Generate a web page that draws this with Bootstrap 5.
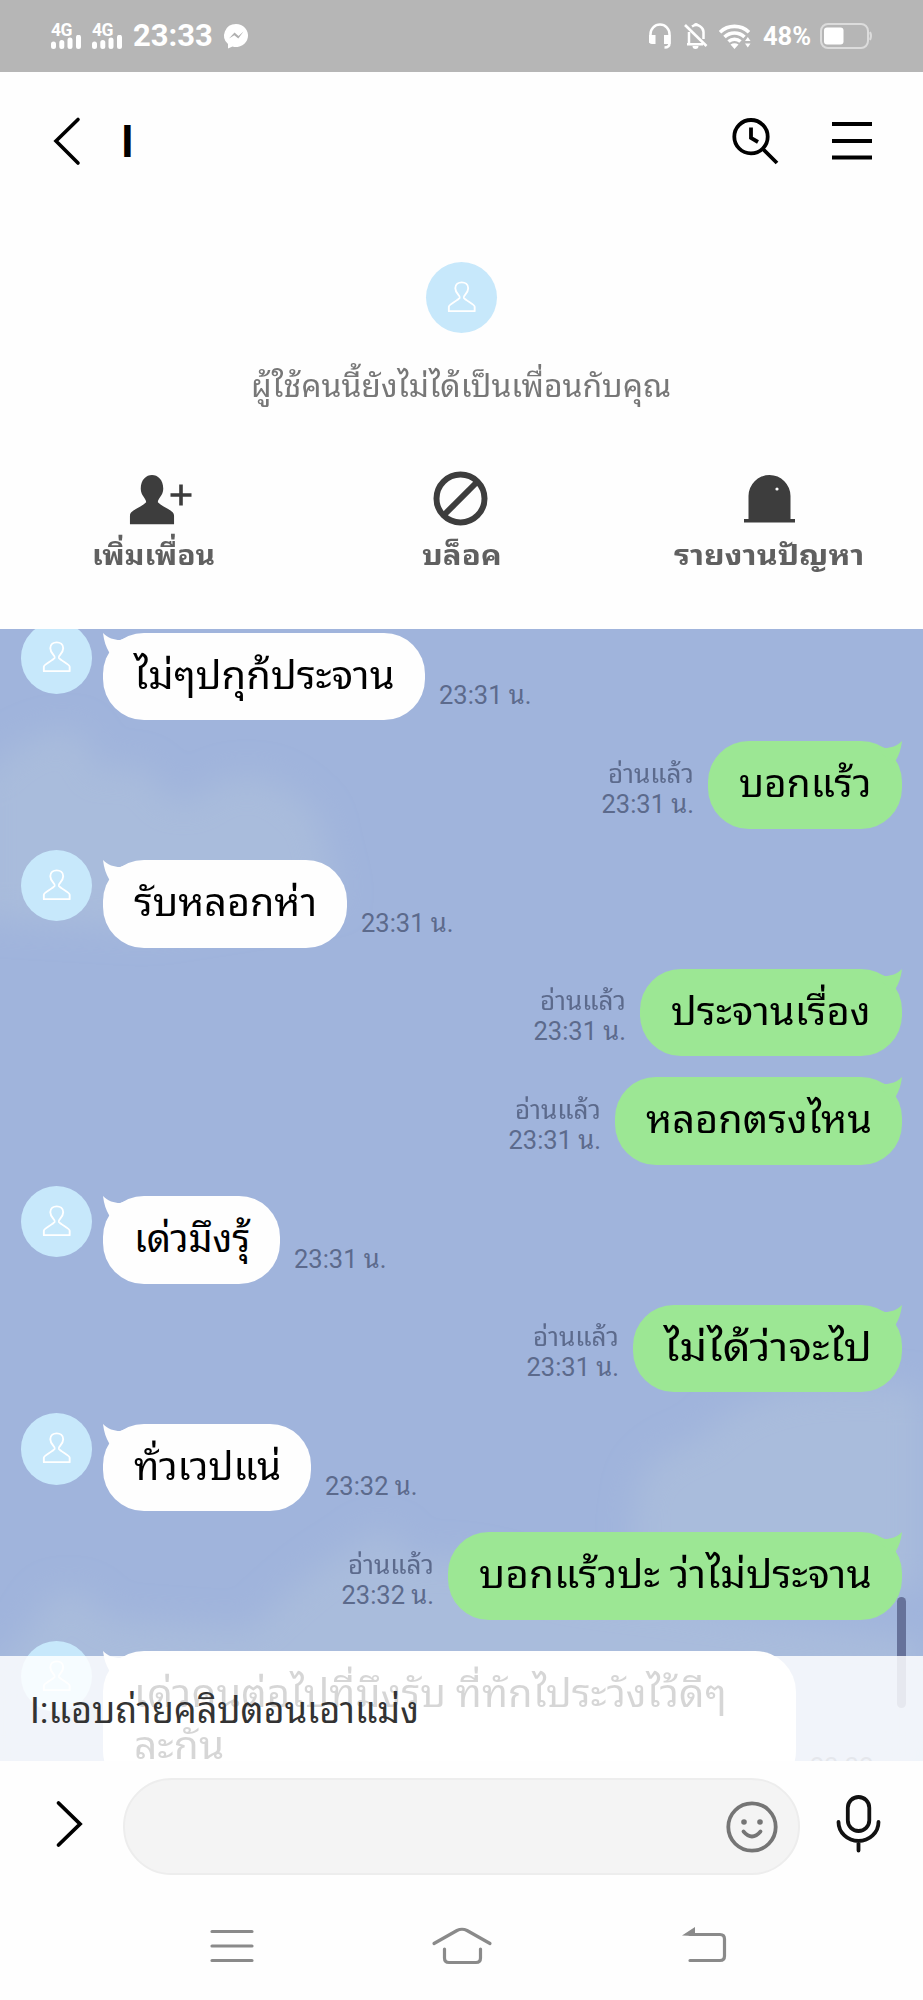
<!DOCTYPE html>
<html lang="th">
<head>
<meta charset="utf-8">
<meta name="viewport" content="width=device-width, initial-scale=1">
<title>Chat</title>
<link href="https://cdn.jsdelivr.net/npm/bootstrap@5.3.0/dist/css/bootstrap.min.css" rel="stylesheet">
<style>
body{width:923px;height:2000px;overflow:hidden;background:#fefefe;color:#000;font-family:Roboto,"Noto Sans Thai Looped","Noto Looped Thai","Droid Sans Thai","Waree","Loma","Noto Sans Thai","Noto Sans",sans-serif}
svg{display:block;flex:none;overflow:visible}
.status{height:72px;background:#b6b6b6;color:#fff;padding-left:51px;padding-right:51px}
.sig{width:30px;margin-right:11px}
.sig b{font-size:17.5px;line-height:14px;height:12px;letter-spacing:-.6px}
.clock{font-size:31px;line-height:36px;width:91px;font-weight:700}
.pct{font-size:25.5px;line-height:36px;font-weight:700}
.topbar{height:138px;padding:0 51px 0 54px}
.peer{font-size:43.5px;line-height:50px;font-weight:700;margin-left:39px;padding-top:4px}
.notice{height:419px}
.ava{width:71.5px;height:71.5px;background:#c7e8fb;flex:none}
.hint{font-size:31px;line-height:44px;color:#777}
.act{font-size:28px;line-height:40px;font-weight:700;color:#606060}
.act svg{margin-bottom:11px}
.fit{display:inline-block;white-space:nowrap}
.chat{height:1132px;background:#a0b4dc}
.msg{height:87.5px;margin-bottom:21px}
.gap-big{margin-bottom:31.5px}
.in{padding-left:20.5px}
.in .ava{margin-top:-10.5px;margin-right:11px}
.out{padding-right:21px;justify-content:flex-end}
.bub{height:87.5px;border-radius:41px;padding:17px 31px 0;font-size:38px;line-height:52px;position:relative;flex:none;white-space:nowrap}
.bub .fit,.toast-line .fit{transform-origin:left}
.in .bub{background:#fefefe}
.out .bub{background:#9ce794}
.tail{position:absolute;top:0;left:0}
.out .tail{left:auto;right:0;transform:scaleX(-1)}
.when{font-size:25.5px;line-height:30px;color:#5c6a8c;margin-left:14px;padding-bottom:10px;white-space:nowrap}
.when .fit{transform-origin:right}
.out .when{margin:0 14px 0 0;text-align:right}
.toast-line{position:absolute;left:0;right:0;top:1027px;height:105px;background:rgba(255,255,255,.84);color:#333;font-size:36px;line-height:52px;padding:29px 0 0 30px;white-space:nowrap}
.thumb{position:absolute;right:17.5px;top:968px;width:8.5px;height:111px;border-radius:5px;background:#66729a}
.compose{height:129px;padding-left:57px}
.pill{width:677px;height:97px;margin-left:42px;margin-top:2px;background:#f4f4f4;border:2px solid #ededed;padding-right:20px}
.sys{height:110px}
</style>
</head>
<body>
<svg width="0" height="0" class="position-absolute">
  <defs>
    <symbol id="user" viewBox="0 0 72 72"><path d="M23 49.500v-4.500c0-2.500 9-6 11-9 1-2-4.500-4-4.500-9.500 0-8 13-8 13 0 0 5.500-5.500 7.500-4.500 9.500 2 3 11 6.500 11 9v4.500z" fill="none" stroke="#fff" stroke-width="1.900" stroke-linejoin="round"/></symbol>
    <symbol id="horn" viewBox="0 0 40 40"><path d="M0 0C5 5 11 7 17 7L26 4 10 25 6 19C3 14 1 8 0 0z"/></symbol>
    <symbol id="bars" viewBox="0 0 30 14"><path d="M2.500 9v2.500M10.800 7.500v4M19 5v6.500M27.500 2.300v9.200" stroke="#fff" stroke-width="5" stroke-linecap="round"/></symbol>
  </defs>
</svg>

<header class="status d-flex align-items-center">
  <div class="sig d-flex flex-column"><b>4G</b><svg width="30" height="14"><use href="#bars"/></svg></div>
  <div class="sig d-flex flex-column"><b>4G</b><svg width="30" height="14"><use href="#bars"/></svg></div>
  <div class="clock">23:33</div>
  <svg width="24" height="25" viewBox="0 0 24 25"><path d="M12 0a12 11.500 0 1 1-3.500 22.500L4 24.500V20A12 11.500 0 0 1 12 0z" fill="#fff"/><path d="M5 14.500l5.500-6 4 3.500 5-4.500-5.200 7-4-3.300z" fill="#b0b0b0"/></svg>
  <div class="d-flex align-items-center ms-auto">
    <svg width="22" height="26" viewBox="0 0 22 26" style="margin-right:14px"><path d="M1.500 20V11a9.500 9.500 0 0 1 19 0v9c0 3-2 4.500-5 4.500" fill="none" stroke="#fff" stroke-width="2.500"/><path d="M0 12h6.500v9H3a3 3 0 0 1-3-3zM15 12h6.500v9H15z" fill="#fff"/></svg>
    <svg width="22" height="26" viewBox="0 0 22 26" class="me-2"><path d="M4 9v12M2 21.200h16M7 3.500C13-.5 18.500 5 18.500 9v7" fill="none" stroke="#fff" stroke-width="2.500"/><path d="M0 2l21.500 21" stroke="#fff" stroke-width="2.600"/><path d="M7.500 23h6a3 3 0 0 1-6 0zM8.500 2.500a2.500 2.500 0 0 1 5 0z" fill="#fff"/></svg>
    <svg width="32" height="25" viewBox="0 0 32 25" class="ms-1" style="margin-right:12px"><g fill="none" stroke="#fff" stroke-width="3.600"><path d="M1 8.200a21 21 0 0 1 29 0"/><path d="M5.500 13a14.500 14.500 0 0 1 20 0"/><path d="M9.500 17.500a9 9 0 0 1 12 0"/></g><path d="M11.500 20.500q4-2.500 8 0l-4 4.500zM26 17l2.800-4 2.700 4zM26 19.500h5.500l-2.700 4z" fill="#fff"/></svg>
    <div class="pct">48%</div>
    <svg width="52" height="26" viewBox="0 0 52 26" style="margin-left:9px"><rect x="1" y="1" width="47" height="24" rx="7" fill="none" stroke="#dcdcdc" stroke-width="2"/><rect x="4" y="4.500" width="19.500" height="17" rx="3" fill="#fff"/><path d="M50 9q2 4 0 8" stroke="#dcdcdc" stroke-width="2" fill="none"/></svg>
  </div>
</header>

<nav class="topbar d-flex align-items-center">
  <svg width="28" height="46" viewBox="0 0 28 46"><path d="M24 1.500L2 23l22 22" fill="none" stroke="#000" stroke-width="3.600" stroke-linecap="round"/></svg>
  <div class="peer">I</div>
  <svg width="46" height="46" viewBox="0 0 46 46" class="ms-auto"><g fill="none" stroke="#000" stroke-width="3.800"><circle cx="19" cy="18.700" r="16.700"/><path d="M19 9.500V20l7 4M31 31l14 14"/></g></svg>
  <svg width="40" height="38" viewBox="0 0 40 38" style="margin-left:54px"><path d="M0 2h40M0 19h40M0 35.500h40" stroke="#000" stroke-width="4"/></svg>
</nav>

<section class="notice">
  <div class="d-flex flex-column align-items-center" style="padding-top:51.5px">
    <div class="ava rounded-circle"><svg width="71.500" height="71.500"><use href="#user"/></svg></div>
    <div class="hint" style="margin-top:32px"><span class="fit" data-w="420">ผู้ใช้คนนี้ยังไม่ได้เป็นเพื่อนกับคุณ</span></div>
  </div>
  <div class="row g-0 text-center" style="margin-top:60px">
    <div class="col-4 act d-flex flex-column align-items-center"><svg width="64" height="56" viewBox="0 0 64 56"><path d="M5.500 55V46c0-6 12-8 18-14 0-4-6-7-6-14 0-19 25-19 25 0 0 7-6 10-6 14 6 6 18 8 18 14v9z" transform="translate(3 2.500) scale(.9 .96)" fill="#3d3d3d"/><path d="M59 15.500v21M48.500 26h21" stroke="#3d3d3d" stroke-width="3.600"/></svg><span class="fit" data-w="123">เพิ่มเพื่อน</span></div>
    <div class="col-4 act d-flex flex-column align-items-center"><svg width="56" height="56" viewBox="0 0 56 56"><g fill="none" stroke="#3d3d3d" stroke-width="6"><circle cx="27.500" cy="29.500" r="24"/><path d="M44 13L11 46"/></g></svg><span class="fit" data-w="80">บล็อค</span></div>
    <div class="col-4 act d-flex flex-column align-items-center"><svg width="52" height="56" viewBox="0 0 52 56"><path d="M5.500 50V27a21 21 0 0 1 42 0v23h4.500v3.500H1v-3.500z" fill="#3d3d3d"/><circle cx="34" cy="20" r="1.600" fill="#fff"/></svg><span class="fit" data-w="190">รายงานปัญหา</span></div>
  </div>
</section>

<main class="chat position-relative overflow-hidden">
  <svg width="923" height="1132" class="position-absolute top-0 start-0">
    <defs><filter id="soft" x="-20%" y="-20%" width="140%" height="140%"><feGaussianBlur stdDeviation="16"/></filter></defs>
    <g fill="#a9bcdc" filter="url(#soft)">
      <path d="M-20 150Q25 100 75 100Q95 120 100 145Q140 120 165 165Q185 180 200 165Q260 120 320 190Q330 240 340 270L150 300L-20 290z"/>
      <path d="M923 760Q760 740 700 810Q660 820 640 850Q620 930 660 970L923 960z"/>
      <path d="M-20 1050L30 1000Q60 930 110 990L250 1000Q310 940 350 920Q390 880 410 930Q480 920 560 960L923 1010V1140H-20z"/>
    </g>
  </svg>
  <div class="position-relative" style="padding-top:3.5px">
    <div class="msg in d-flex"><div class="ava rounded-circle"><svg width="71.500" height="71.500"><use href="#user"/></svg></div><div class="bub" style="width:322px"><svg class="tail" width="40" height="40" fill="#fefefe"><use href="#horn"/></svg><span class="fit" data-w="261">ไม่ๆปกุก้ประจาน</span></div><div class="when align-self-end">23:31 น.</div></div>
    <div class="msg gap-big out d-flex"><div class="when align-self-end"><span class="fit" data-w="86">อ่านแล้ว</span><br>23:31 น.</div><div class="bub" style="width:194px"><svg class="tail" width="40" height="40" fill="#9ce794"><use href="#horn"/></svg><span class="fit" data-w="132">บอกแร้ว</span></div></div>
    <div class="msg in d-flex"><div class="ava rounded-circle"><svg width="71.500" height="71.500"><use href="#user"/></svg></div><div class="bub" style="width:244px"><svg class="tail" width="40" height="40" fill="#fefefe"><use href="#horn"/></svg><span class="fit" data-w="183">รับหลอกห่า</span></div><div class="when align-self-end">23:31 น.</div></div>
    <div class="msg out d-flex"><div class="when align-self-end"><span class="fit" data-w="86">อ่านแล้ว</span><br>23:31 น.</div><div class="bub" style="width:262px"><svg class="tail" width="40" height="40" fill="#9ce794"><use href="#horn"/></svg><span class="fit" data-w="200">ประจานเรื่อง</span></div></div>
    <div class="msg gap-big out d-flex"><div class="when align-self-end"><span class="fit" data-w="86">อ่านแล้ว</span><br>23:31 น.</div><div class="bub" style="width:287px"><svg class="tail" width="40" height="40" fill="#9ce794"><use href="#horn"/></svg><span class="fit" data-w="226">หลอกตรงไหน</span></div></div>
    <div class="msg in d-flex"><div class="ava rounded-circle"><svg width="71.500" height="71.500"><use href="#user"/></svg></div><div class="bub" style="width:177px"><svg class="tail" width="40" height="40" fill="#fefefe"><use href="#horn"/></svg><span class="fit" data-w="116">เด่วมึงรุ้</span></div><div class="when align-self-end">23:31 น.</div></div>
    <div class="msg gap-big out d-flex"><div class="when align-self-end"><span class="fit" data-w="86">อ่านแล้ว</span><br>23:31 น.</div><div class="bub" style="width:269px"><svg class="tail" width="40" height="40" fill="#9ce794"><use href="#horn"/></svg><span class="fit" data-w="208">ไม่ได้ว่าจะไป</span></div></div>
    <div class="msg in d-flex"><div class="ava rounded-circle"><svg width="71.500" height="71.500"><use href="#user"/></svg></div><div class="bub" style="width:208px"><svg class="tail" width="40" height="40" fill="#fefefe"><use href="#horn"/></svg><span class="fit" data-w="147">ทั่วเวปแน่</span></div><div class="when align-self-end">23:32 น.</div></div>
    <div class="msg gap-big out d-flex"><div class="when align-self-end"><span class="fit" data-w="86">อ่านแล้ว</span><br>23:32 น.</div><div class="bub" style="width:454px"><svg class="tail" width="40" height="40" fill="#9ce794"><use href="#horn"/></svg><span class="fit" data-w="393">บอกแร้วปะ ว่าไม่ประจาน</span></div></div>
    <div class="msg in d-flex" style="height:141px"><div class="ava rounded-circle"><svg width="71.500" height="71.500"><use href="#user"/></svg></div><div class="bub" style="width:693px;height:141px"><svg class="tail" width="40" height="40" fill="#fefefe"><use href="#horn"/></svg><span class="fit" data-w="593">เด่วคนต่อไปที่มึงรับ ที่ทักไประวังไว้ดีๆ</span><br><span class="fit" data-w="90">ละกัน</span></div><div class="when align-self-end">23:32 น.</div></div>
  </div>
  <div class="thumb"></div>
  <div class="toast-line"><span class="fit" data-w="389">I:แอบถ่ายคลิปตอนเอาแม่ง</span></div>
</main>

<footer>
  <div class="compose d-flex align-items-center">
    <svg width="24" height="48" viewBox="0 0 24 48" style="margin-top:-3px"><path d="M1.500 3l21.500 21L1.500 45" fill="none" stroke="#000" stroke-width="3.800" stroke-linecap="round"/></svg>
    <div class="pill rounded-pill d-flex align-items-center justify-content-end"><svg width="52" height="52" viewBox="0 0 52 52"><g fill="none" stroke="#757575" stroke-width="3.800" stroke-linecap="round"><circle cx="26" cy="26" r="23.700"/><path d="M17.500 30.500q8.500 10 17 0"/></g><circle cx="18" cy="21" r="2.800" fill="#757575"/><circle cx="34" cy="21" r="2.800" fill="#757575"/></svg></div>
    <svg width="44" height="58" viewBox="0 0 44 58" style="margin-left:36px;margin-top:-5px"><g fill="none" stroke="#111" stroke-width="3.800" stroke-linecap="round"><rect x="11.800" y="3" width="21.500" height="34" rx="10.700"/><path d="M2.500 28a20 19 0 0 0 40 0M22.500 47v9.500"/></g></svg>
  </div>
  <div class="sys d-flex">
    <svg width="923" height="110" viewBox="0 1890 923 110"><g fill="none" stroke="#8a8a8a" stroke-width="3.200" stroke-linecap="round" stroke-linejoin="round"><path d="M212 1931.500h40M212 1946h40M212 1960.500h40"/><path d="M434 1943.500L457 1930.500Q462 1928 467 1930.500L490 1943.500M444.500 1949v9q0 4.500 4.500 4.500h27q4.500 0 4.500-4.500v-9"/><path d="M690 1960.500h30q4.500 0 4.500-4.500v-17q0-4.500-4.500-4.500h-30"/></g><path d="M682 1935.500l13-8.500v9z" fill="#8a8a8a"/></svg>
  </div>
</footer>
<script src="https://cdn.jsdelivr.net/npm/bootstrap@5.3.0/dist/js/bootstrap.bundle.min.js"></script>
<script>
// stretch each label to its design width
document.querySelectorAll('.fit').forEach(function (el) {
  el.style.transform = 'scaleX(' + (el.dataset.w / el.offsetWidth).toFixed(4) + ')';
});
</script>
</body>
</html>
